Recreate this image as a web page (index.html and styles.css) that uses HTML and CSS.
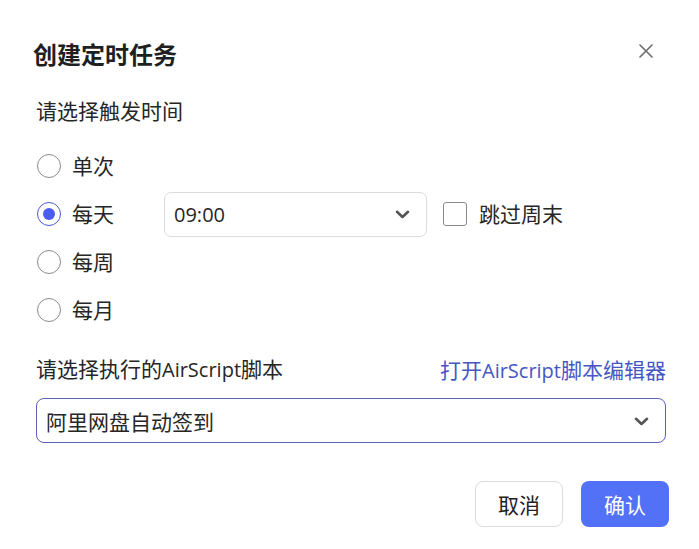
FILE: index.html
```html
<!DOCTYPE html>
<html lang="zh-CN">
<head>
<meta charset="utf-8">
<title>创建定时任务</title>
<link rel="stylesheet" href="styles.css">
</head>
<body>
<div class="dialog">
  <div class="header">
    <div class="title">创建定时任务</div>
    <svg class="close" width="14" height="14" viewBox="0 0 14 14"><path d="M1 1L13 13M13 1L1 13" stroke="#6b6b6b" stroke-width="1.6" fill="none" stroke-linecap="round"/></svg>
  </div>
  <div class="section-label">请选择触发时间</div>
  <div class="radios">
    <div class="row">
      <div class="radio-item"><span class="radio"></span><span class="rlabel">单次</span></div>
    </div>
    <div class="row">
      <div class="radio-item"><span class="radio checked"></span><span class="rlabel">每天</span></div>
      <div class="select time">
        <span class="value">09:00</span>
        <svg class="chev" width="15" height="9" viewBox="0 0 15 9"><path d="M2 1.8L7.5 7L13 1.8" stroke="#555" stroke-width="2.6" fill="none" stroke-linecap="round" stroke-linejoin="round"/></svg>
      </div>
      <span class="checkbox"></span><span class="cblabel">跳过周末</span>
    </div>
    <div class="row">
      <div class="radio-item"><span class="radio"></span><span class="rlabel">每周</span></div>
    </div>
    <div class="row">
      <div class="radio-item"><span class="radio"></span><span class="rlabel">每月</span></div>
    </div>
  </div>
  <div class="script-head">
    <span class="script-label">请选择执行的<span class="latin">AirScript</span>脚本</span>
    <span class="link">打开<span class="latin">AirScript</span>脚本编辑器</span>
  </div>
  <div class="select script">
    <span class="value">阿里网盘自动签到</span>
    <svg class="chev" width="15" height="9" viewBox="0 0 15 9"><path d="M2 1.8L7.5 7L13 1.8" stroke="#555" stroke-width="2.6" fill="none" stroke-linecap="round" stroke-linejoin="round"/></svg>
  </div>
  <div class="footer">
    <div class="btn cancel">取消</div>
    <div class="btn ok">确认</div>
  </div>
</div>
</body>
</html>
```
FILE: styles.css
```css
html, body {
  margin: 0;
  padding: 0;
  background: #fff;
}
body {
  font-family: "Open Sans", "Noto Sans CJK SC", sans-serif;
  color: #262626;
}
.dialog {
  width: 699px;
  height: 549px;
  box-sizing: border-box;
  padding: 36px 33px 0 36px;
}
.header {
  display: flex;
  align-items: center;
  justify-content: space-between;
  height: 36px;
}
.title {
  font-family: "Noto Sans CJK SC", sans-serif;
  font-size: 24px;
  font-weight: 700;
  line-height: 36px;
  margin-left: -3px;
  color: #1f1f1f;
}
.close {
  margin-right: 13px;
  margin-top: -6px;
}
.section-label {
  margin-top: 24px;
  font-size: 21px;
  line-height: 30px;
}
.radios {
  margin-top: 16px;
  display: flex;
  flex-direction: column;
}
.row {
  height: 48px;
  display: flex;
  align-items: center;
}
.radio-item {
  width: 128px;
  display: flex;
  align-items: center;
}
.radio {
  width: 24px;
  height: 24px;
  box-sizing: border-box;
  border: 1px solid #8c8c8c;
  border-radius: 50%;
  margin-left: 1px;
  display: flex;
  align-items: center;
  justify-content: center;
}
.radio.checked {
  border-color: #4b5bd6;
}
.radio.checked::after {
  content: "";
  width: 12px;
  height: 12px;
  border-radius: 50%;
  background: #4a5cf2;
}
.rlabel {
  margin-left: 11px;
  font-size: 21px;
  line-height: 30px;
}
.select {
  box-sizing: border-box;
  height: 45px;
  border: 1px solid #dcdcdc;
  border-radius: 7px;
  display: flex;
  align-items: center;
  justify-content: space-between;
  padding: 0 16px 0 9px;
  font-size: 21px;
}
.select.time {
  width: 263px;
  font-size: 20px;
}
.select .chev {
  margin-top: 1px;
}
.checkbox {
  width: 24px;
  height: 24px;
  box-sizing: border-box;
  border: 1px solid #8a8a8a;
  border-radius: 3px;
  margin-left: 16px;
}
.cblabel {
  margin-left: 12px;
  font-size: 21px;
  line-height: 30px;
}
.script-head {
  margin-top: 20px;
  height: 30px;
  display: flex;
  align-items: center;
  justify-content: space-between;
  font-size: 21px;
  line-height: 30px;
}
.latin {
  font-size: 20px;
}
.link {
  color: #4557c4;
  margin-top: 3px;
}
.select.script {
  margin-top: 14px;
  width: 630px;
  border-color: #5a63b5;
  border-radius: 8px;
}
.footer {
  margin-top: 38px;
  display: flex;
  justify-content: flex-end;
  gap: 18px;
  margin-right: -3px;
}
.btn {
  width: 88px;
  height: 46px;
  box-sizing: border-box;
  border-radius: 8px;
  display: flex;
  align-items: center;
  justify-content: center;
  font-size: 21px;
}
.btn.cancel {
  border: 1px solid #dcdcdc;
  color: #222;
}
.btn.ok {
  background: #5271f6;
  color: #fff;
}
```
